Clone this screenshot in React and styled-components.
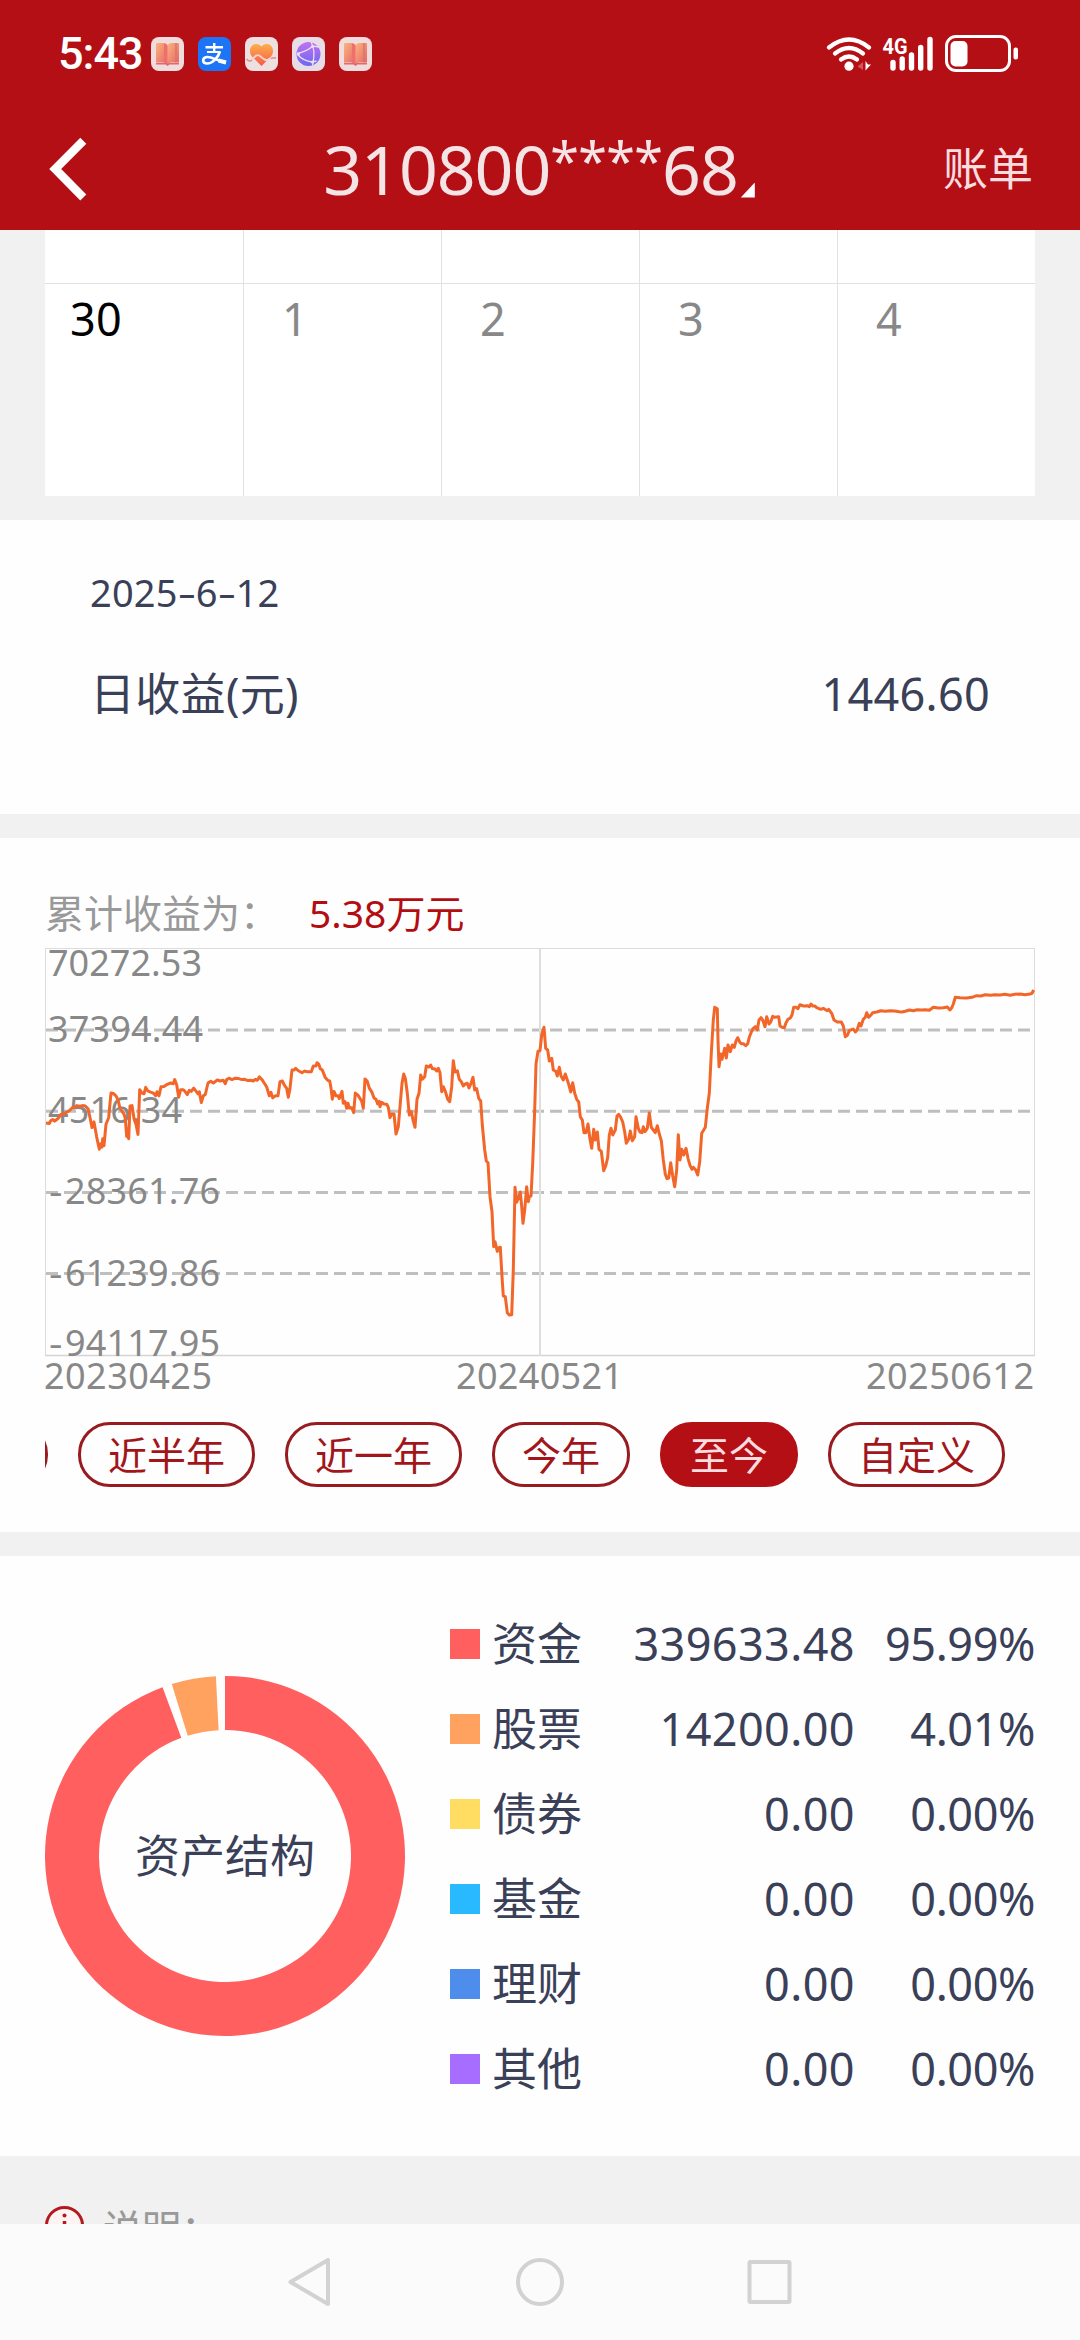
import React from 'react';
import styled, { createGlobalStyle } from 'styled-components';

const GlobalStyle = createGlobalStyle`
  * {
    box-sizing: border-box;
  }
  body {
    margin: 0;
    background: #f1f1f1;
    font-family: "Noto Sans", "Noto Sans CJK SC", sans-serif;
    color: #3a4058;
  }
`;

const Screen = styled.div`
  display: flex;
  flex-direction: column;
  width: 1080px;
  height: 2340px;
  overflow: hidden;
`;

const Header = styled.header`
  flex: none;
  height: 230px;
  background: #b40f15;
`;

const StatusBar = styled.div`
  display: flex;
  align-items: center;
  height: 107px;
  padding: 0 61px 0 58px;
`;

const Clock = styled.span`
  width: 93px;
  font-family: Roboto, sans-serif;
  font-size: 45px;
  font-weight: 500;
  letter-spacing: -1px;
  color: #fff;
`;

const AppIcons = styled.div`
  display: flex;
  gap: 14px;
  flex: 1;
`;

const StatusIcons = styled.svg`
  display: block;
  width: 194px;
  height: 40px;
`;

const TitleBar = styled.div`
  display: flex;
  align-items: center;
  justify-content: space-between;
  height: 123px;
  padding: 0 47px 0 45px;
`;

const SideSlot = styled.div`
  display: flex;
  width: 100px;
  justify-content: ${(props) => (props.$end ? 'flex-end' : 'flex-start')};
  font-size: 45px;
  line-height: 60px;
  color: #fbdde0;
`;

const Account = styled.h1`
  display: flex;
  align-items: center;
  margin: 0;
  font-size: 68px;
  font-weight: 400;
  line-height: 90px;
  letter-spacing: -1.05px;
  color: #f5e4e6;
`;

const Stars = styled.span`
  position: relative;
  top: -9px;
  font-size: 52px;
  letter-spacing: -0.7px;
`;

const Corner = styled.i`
  align-self: flex-end;
  width: 14px;
  height: 15px;
  margin: 0 0 16px 3px;
  background: #fff;
  clip-path: polygon(100% 0, 100% 100%, 0 100%);
`;

const Body = styled.main`
  flex: 1;
  min-height: 0;
  overflow: hidden;
`;

const Calendar = styled.div`
  display: grid;
  grid-template-columns: repeat(5, 198px);
  grid-template-rows: 53px 213px;
  margin: 0 45px 24px;
  background: #fff;
`;

const Day = styled.div`
  border-left: ${(props) => (props.$first ? 'none' : '1px solid #e2e2e2')};
  border-top: ${(props) => (props.$top ? 'none' : '1px solid #e2e2e2')};
`;

const DayNumber = styled.span`
  display: block;
  width: 102px;
  padding-top: 5px;
  text-align: center;
  font-size: 45px;
  line-height: 60px;
  letter-spacing: 0.3px;
  color: ${(props) => (props.$current ? '#000' : '#888')};
`;

const Card = styled.section`
  height: ${(props) => props.$height}px;
  margin-bottom: 24px;
  padding: ${(props) => props.$padding};
  background: #fefefe;
`;

const DateLine = styled.div`
  font-size: 38px;
  line-height: 65px;
  letter-spacing: 0.2px;
`;

const Dash = styled.span`
  display: inline-block;
  width: 18px;
  text-align: center;
  transform: scaleX(1.5);
`;

const ProfitRow = styled.div`
  display: flex;
  justify-content: space-between;
  margin-top: 19px;
  font-size: 45px;
  line-height: 100px;
  letter-spacing: 0.3px;
`;

const TotalLine = styled.div`
  display: flex;
  align-items: center;
  height: 74px;
  font-size: 39px;
  color: #999;
`;

const TotalValue = styled.span`
  margin-left: 30px;
  color: #b30d12;
`;

const ChartSvg = styled.svg`
  display: block;
  width: 990px;
  height: 450px;
  overflow: visible;

  text {
    font-size: 36px;
    fill: #888;
  }
`;

const Ranges = styled.div`
  display: flex;
  gap: 30px;
  margin-top: 24px;
  overflow: hidden;
`;

const RangeButton = styled.button`
  flex: none;
  height: 65px;
  padding: 0 27px;
  border: 3px solid ${(props) => (props.$active ? '#b40f15' : '#981b20')};
  border-radius: 32px;
  background: ${(props) => (props.$active ? '#b40f15' : '#fefefe')};
  color: ${(props) => (props.$active ? '#fbdde0' : '#a2161b')};
  font-family: inherit;
  font-size: 39px;
  line-height: 57px;
`;

// the range before the first visible one, scrolled almost out of view
const ScrolledRange = styled(RangeButton)`
  width: 177px;
  margin-left: -174px;
`;

const Assets = styled.div`
  display: flex;
  justify-content: space-between;
`;

const Donut = styled.svg`
  width: 360px;
  height: 360px;
  margin-top: 75px;

  text {
    font-size: 45px;
    fill: #3a4058;
  }
`;

const Legend = styled.div`
  width: 585px;
`;

const LegendRow = styled.div`
  display: grid;
  grid-template-columns: 42px 120px 1fr 180px;
  align-items: center;
  height: 85px;
  font-size: 45px;
  line-height: 60px;
`;

const Swatch = styled.i`
  width: 30px;
  height: 30px;
  background: ${(props) => props.$color};
`;

const Amount = styled.span`
  text-align: right;
  letter-spacing: 0.4px;
`;

const Percent = styled(Amount)`
  letter-spacing: -0.4px;
`;

const Notice = styled.div`
  display: flex;
  align-items: flex-start;
  gap: 19px;
  padding: 26px 45px 0;
  font-size: 39px;
  line-height: 44px;
  color: #999;
`;

const NavBar = styled.nav`
  display: flex;
  flex: none;
  justify-content: center;
  height: 116px;
  background: #fbfbfb;
`;

const days = ['30', '1', '2', '3', '4'];

const ranges = ['近半年', '近一年', '今年', '至今', '自定义'];

const assets = [
  { name: '资金', amount: '339633.48', percent: '95.99%', color: '#ff5f5f' },
  { name: '股票', amount: '14200.00', percent: '4.01%', color: '#ffa15f' },
  { name: '债券', amount: '0.00', percent: '0.00%', color: '#ffdd62' },
  { name: '基金', amount: '0.00', percent: '0.00%', color: '#28b9ff' },
  { name: '理财', amount: '0.00', percent: '0.00%', color: '#4f8ded' },
  { name: '其他', amount: '0.00', percent: '0.00%', color: '#a76dff' },
];

const yLabels = [
  { sign: '', value: '70272.53', y: 28, width: 152 },
  { sign: '', value: '37394.44', y: 94, width: 153 },
  { sign: '', value: '4516.34', y: 175, width: 132 },
  { sign: '-', value: '28361.76', y: 256, width: 153 },
  { sign: '-', value: '61239.86', y: 337.5, width: 153 },
  { sign: '-', value: '94117.95', y: 408, width: 153 },
];

// profit curve in three pieces, each with its own origin and scale
const pieces = [
  {
    x: -15, y: -78, sy: 2.958,
    points: '48,748 58,750 62,742 68,738 74,743 80,738 86,733 92,723 100,722 110,716 118,712 126,704 134,702 140,697 150,699 158,697 166,698 174,706 180,732 186,762 192,745 200,790 208,826 212,810 216,820 218,795 222,815 228,752 236,732 240,690 243,660 250,661 258,668 264,680 270,705 282,722 286,735 290,788 292,765 296,795 300,698 306,697 312,735 318,752 324,782 329,650 336,660 342,662 347,643 353,653 362,657 370,660 377,668 381,656 387,668 393,641 402,640 412,634 422,630 430,632 434,620 440,636 446,672 452,650 460,650 466,656 472,664 478,652 484,655 491,645 498,654 504,662 508,656 514,688 520,668 526,664 534,630 542,625 550,630 556,626 562,621 570,624 580,622 586,632 590,620 597,616 606,620 616,616 626,617 636,620 644,619 654,623 662,622 670,624 676,619 682,622 688,612 696,620 704,632 710,642 718,668 723,658 728,674 736,668 744,668 750,626 757,624 764,638 770,646 775,672 780,646 786,592 792,592 797,587 804,593 816,600 824,595 832,597 844,597 850,580 858,580 861,570 866,574 871,588 877,592 886,614 893,622 899,624 903,645 907,678 912,655 918,668 924,668 928,676 936,655 940,690 945,685 950,705 954,690 958,704 965,703 971,718 976,660 984,666 990,676 995,684 1000,705 1005,618 1012,625 1018,645 1026,658 1032,674 1038,678 1043,692 1048,684',
  },
  {
    x: 335, y: -18, sy: 3,
    points: '0,530 5,517 12,522 20,523 25,532 30,563 35,552 42,552 48,612 55,590 60,530 66,460 71,432 76,445 82,490 88,555 94,545 99,570 105,592 111,508 117,490 122,435 127,448 134,440 139,408 147,411 152,405 157,416 164,416 170,423 175,415 180,428 185,485 190,470 196,484 203,508 209,515 215,470 220,392 225,426 232,422 238,448 244,455 250,468 257,461 262,460 267,474 273,460 279,442 284,480 290,476 296,505 302,513 307,585 314,660 319,693 324,698 330,800 336,845 341,950 345,935 352,964 357,953 361,952 366,1040 370,1098 376,1100 382,1148 388,1155 395,1154 400,1020 405,772 410,817 416,800 421,786 425,830 429,880 434,840 440,770 445,815 448,800 453,798 458,700 464,540 468,402 474,364 480,362 485,315 492,292 497,355 503,360 508,393 515,385 520,420 527,424 532,438 538,412 543,438 550,450 556,432 562,450 567,466 572,486 578,458 584,490 590,508 596,516 601,560 607,570 612,608 618,608 624,582 630,628 635,655 641,598 646,630 652,606 657,658 664,664 671,722 677,708 683,683 688,615 693,595 698,615 706,600 711,558 716,553 722,562 728,576 734,606 739,640 746,628 751,603 757,632 764,620 768,560 775,595 780,606 786,608 790,590 795,605 802,595 808,549 814,592 820,600 826,608 832,587 838,612 844,632 850,690 856,733 861,746 866,744 872,698 878,738 884,770 890,720 895,614 900,690 905,658 911,675 918,655 924,685 930,706 936,718 940,712 947,720 953,735 959,695 965,610 971,600 976,592 982,535 988,490 994,370 1000,270 1004,232 1012,236 1014,330',
  },
  {
    x: 655, y: -18, sy: 3,
    points: '57,410 62,372 66,388 70,372 74,355 79,384 84,345 91,365 97,345 103,352 108,333 113,323 119,336 124,341 130,341 137,347 143,341 148,322 154,306 160,295 166,290 172,300 177,270 183,263 189,272 195,290 200,260 207,282 212,276 218,259 224,262 236,260 240,288 246,292 253,293 258,278 264,268 271,264 276,255 281,232 288,232 294,236 300,224 310,228 322,227 328,230 333,222 338,228 344,228 350,233 362,238 370,235 378,240 382,242 386,238 395,250 402,270 412,276 424,276 430,288 436,320 442,316 448,302 455,299 460,297 466,306 472,298 478,280 483,288 490,268 496,262 500,248 506,262 512,256 518,248 530,246 542,242 556,244 570,242 584,243 598,245 606,246 616,244 628,240 640,242 652,239 664,240 676,239 688,241 700,232 715,234 730,233 742,231 750,240 756,232 760,222 766,202 780,203 800,204 816,202 830,197 842,198 856,194 872,196 884,194 900,195 915,193 930,196 945,193 960,192 975,194 990,192 996,190 1001,180',
  },
];

const curve = pieces
  .map((piece) =>
    piece.points
      .split(' ')
      .map((point) => {
        const [x, y] = point.split(',').map(Number);
        return `${(x / 3 + piece.x).toFixed(1)},${(y / piece.sy + piece.y).toFixed(1)}`;
      })
      .join(' ')
  )
  .join(' ');

// ring slice between two angles, degrees clockwise from the top
const slice = (from, to) => {
  const at = (r, deg) => {
    const a = (deg * Math.PI) / 180;
    return `${(180 + r * Math.sin(a)).toFixed(2)} ${(180 - r * Math.cos(a)).toFixed(2)}`;
  };
  const large = to - from > 180 ? 1 : 0;
  return `M${at(180, from)} A180 180 0 ${large} 1 ${at(180, to)} L${at(126, to)} A126 126 0 ${large} 0 ${at(126, from)} Z`;
};

function BookIcon({ id }) {
  return (
    <svg width="33" height="34" viewBox="0 0 33 34">
      <defs>
        <linearGradient id={id} x1="0" y1="0" x2="1" y2="1">
          <stop offset="0" stopColor="#fbb47c" />
          <stop offset="1" stopColor="#e5656c" />
        </linearGradient>
      </defs>
      <rect width="33" height="34" rx="8" fill="#f1dcdd" />
      <path d="M5 26h23v1.5H18.5L16.5 29l-2-1.500H5z" fill="#e2686d" />
      <path d="M5 7q0-1 1-1h6q4 0 4.500 2.500V27q-1-1.500-4-1.500H5z" fill={`url(#${id})`} />
      <path d="M28 7q0-1-1-1h-6q-4 0-4.500 2.500V27q1-1.500 4-1.500H28z" fill={`url(#${id})`} />
      <path d="M13 6.200q3 .5 3.500 2.500V27q-1-1.500-3.500-1.500z" fill="#ee7069" />
      <path d="M25 6v19.500" stroke="#d9775f" strokeWidth="1.500" />
    </svg>
  );
}

function PayIcon() {
  return (
    <svg width="33" height="34" viewBox="0 0 33 34">
      <rect width="33" height="34" rx="8" fill="#1d74f5" />
      <g fill="none" stroke="#fff" strokeLinecap="butt">
        <path d="M7.500 10.200h17.500M16.200 6v9" strokeWidth="2.400" />
        <path d="M9 15h13.500" strokeWidth="2" />
        <path d="M22 14.500C20 21 14 27 8.500 26.500 4 26 4 20.500 9 20c5-.5 10 4 19 5.500" strokeWidth="2.600" />
        <path d="M20.500 23.500l7.500 2" strokeWidth="4" />
      </g>
    </svg>
  );
}

function HealthIcon() {
  return (
    <svg width="33" height="34" viewBox="0 0 33 34">
      <defs>
        <linearGradient id="heart" x1="0" y1="0" x2="0" y2="1">
          <stop offset="0" stopColor="#fbb04a" />
          <stop offset="1" stopColor="#f8574b" />
        </linearGradient>
      </defs>
      <rect width="33" height="34" rx="8" fill="#eedfe1" />
      <path d="M16.500 29L7 19.500C3.500 15.500 4.500 8 10.500 7c2.500-.4 4.500.5 6 2.500 1.500-2 3.500-2.900 6-2.500 6 1 7 8.500 3.500 12.500z" fill="url(#heart)" />
      <path d="M1.500 22.500q3 3 5.500.5c2.500-3 4.500-6.500 8-4 3.500 3 5.500 5 8 3.500 2.500-2 4-1.500 8-1.500" fill="none" stroke="#f3d5cf" strokeWidth="1.800" />
      <path d="M1.500 22q3 3.500 5.500 1M26 21.500q2-1 5-.5" fill="none" stroke="#e58f8c" strokeWidth="1.500" />
    </svg>
  );
}

function BrowserIcon() {
  return (
    <svg width="33" height="34" viewBox="0 0 33 34">
      <defs>
        <linearGradient id="globe" x1="0" y1="0" x2="0" y2="1">
          <stop offset="0" stopColor="#c071f2" />
          <stop offset="1" stopColor="#6d68f0" />
        </linearGradient>
      </defs>
      <rect width="33" height="34" rx="8" fill="#e8dde6" />
      <circle cx="16.500" cy="17" r="12" fill="url(#globe)" />
      <g fill="none" stroke="#eadff0" strokeWidth="1.300">
        <path d="M5 16.500Q14 15 21 9l6 1M5.500 17.500Q11 24 20.500 25l4-1M19 5q5 8 1.500 23.500" />
      </g>
      <g fill="#eadff0">
        <circle cx="6.500" cy="17" r="1.600" />
        <circle cx="20.500" cy="9.500" r="1.600" />
        <circle cx="20.500" cy="25" r="1.600" />
      </g>
    </svg>
  );
}

function Status() {
  return (
    <StatusIcons viewBox="825 34 194 40">
      <g fill="none" stroke="#fff" strokeLinecap="round">
        <path d="M829 47.500q20-16 40 0" strokeWidth="4.200" />
        <path d="M835 53.500q14-11 28 0" strokeWidth="4.200" />
        <path d="M841 59.500q8-6 16 0" strokeWidth="4.200" />
        <path d="M893 62.500v5.500M902.200 59v9M911.500 55v13M920.700 47.500v20.500M930 39.500v28.500" strokeWidth="5.400" />
      </g>
      <circle cx="849" cy="66.200" r="4.600" fill="#fff" />
      <path d="M863 62v8l-5.500-3.500z" fill="#d5535a" />
      <path d="M865.500 61v9.500l5.500-6h-3z" fill="#fff" />
      <text x="882.500" y="53.500" fontFamily="Roboto" fontWeight="700" fontSize="22" fill="#fff" textLength="25" lengthAdjust="spacingAndGlyphs">4G</text>
      <rect x="946.500" y="36.500" width="63" height="34" rx="9.500" fill="none" stroke="#fff" strokeWidth="3" />
      <rect x="950.500" y="41" width="17" height="25.500" rx="5" fill="#fff" />
      <rect x="1013.500" y="47.500" width="4.500" height="12" rx="2" fill="#fff" />
    </StatusIcons>
  );
}

function ProfitChart() {
  return (
    <ChartSvg viewBox="0 0 990 450">
      <path d="M0 .5H990M.5 0V408M989.500 0V408" stroke="#dcdcdc" fill="none" />
      <path d="M0 407.500H990" stroke="#d4d4d4" strokeWidth="1.500" />
      {[82, 163.300, 244.500, 325.600].map((y) => (
        <path key={y} d={`M1 ${y}H985`} stroke="#bfbfbf" strokeWidth="3" strokeDasharray="12 6" />
      ))}
      <path d="M495 0V408" stroke="#dedede" strokeWidth="2" />
      {yLabels.map(({ sign, value, y, width }) => (
        <g key={value}>
          {sign && (
            <text x="4" y={y} textLength="13.500" lengthAdjust="spacingAndGlyphs">{sign}</text>
          )}
          <text x={sign ? 20 : 3} y={y} textLength={width + 2}>{value}</text>
        </g>
      ))}
      <text x="-1" y="441" textLength="168">20230425</text>
      <text x="411" y="441" textLength="167">20240521</text>
      <text x="821" y="441" textLength="168">20250612</text>
      <polyline points={curve} fill="none" stroke="#f26629" strokeWidth="3" strokeLinejoin="round" />
    </ChartSvg>
  );
}

export default function App() {
  return (
    <Screen>
      <GlobalStyle />
      <Header>
        <StatusBar>
          <Clock>5:43</Clock>
          <AppIcons>
            <BookIcon id="book-a" />
            <PayIcon />
            <HealthIcon />
            <BrowserIcon />
            <BookIcon id="book-b" />
          </AppIcons>
          <Status />
        </StatusBar>
        <TitleBar>
          <SideSlot>
            <svg width="44" height="66" viewBox="45 135 44 66">
              <path d="M83.300 139.700L55.200 168l28.100 28.500" fill="none" stroke="#fff" strokeWidth="8.500" />
            </svg>
          </SideSlot>
          <Account>
            310800<Stars>****</Stars>68
            <Corner />
          </Account>
          <SideSlot $end>账单</SideSlot>
        </TitleBar>
      </Header>

      <Body>
        <Calendar>
          {days.map((day, i) => (
            <Day key={day} $top $first={i === 0} />
          ))}
          {days.map((day, i) => (
            <Day key={day} $first={i === 0}>
              <DayNumber $current={i === 0}>{day}</DayNumber>
            </Day>
          ))}
        </Calendar>

        <Card $height={294} $padding="40px 90px 0">
          <DateLine>
            2025<Dash>-</Dash>6<Dash>-</Dash>12
          </DateLine>
          <ProfitRow>
            <span>日收益(元)</span>
            <span>1446.60</span>
          </ProfitRow>
        </Card>

        <Card $height={694} $padding="36px 45px 0">
          <TotalLine>
            累计收益为：
            <TotalValue>5.38万元</TotalValue>
          </TotalLine>
          <ProfitChart />
          <Ranges>
            <ScrolledRange />
            {ranges.map((range) => (
              <RangeButton key={range} $active={range === '至今'}>{range}</RangeButton>
            ))}
          </Ranges>
        </Card>

        <Card $height={600} $padding="45px 45px 0">
          <Assets>
            <Donut viewBox="0 0 360 360">
              <path d={slice(0, 339.700)} fill="#ff5f5f" />
              <path d={slice(342.800, 357.100)} fill="#ffa15f" />
              <text x="180" y="197" textAnchor="middle">资产结构</text>
            </Donut>
            <Legend>
              {assets.map(({ name, amount, percent, color }) => (
                <LegendRow key={name}>
                  <Swatch $color={color} />
                  <span>{name}</span>
                  <Amount>{amount}</Amount>
                  <Percent>{percent}</Percent>
                </LegendRow>
              ))}
            </Legend>
          </Assets>
        </Card>

        <Notice>
          <svg width="39" height="39" viewBox="0 0 39 39">
            <circle cx="19.500" cy="19.500" r="18" fill="#fdf3f3" stroke="#b3191e" strokeWidth="3" />
            <circle cx="19.500" cy="9.500" r="2" fill="#b3191e" />
            <path d="M19.500 15v15" stroke="#b3191e" strokeWidth="3.500" />
          </svg>
          说明：
        </Notice>
      </Body>

      <NavBar>
        <svg width="520" height="116" viewBox="280 2224 520 116">
          <g fill="none" stroke="#d2d2d2" strokeWidth="4" strokeLinejoin="round">
            <path d="M290.500 2282L328 2260v44z" />
            <circle cx="540" cy="2282" r="22" />
            <rect x="749.500" y="2262" width="40" height="40" rx="1" />
          </g>
        </svg>
      </NavBar>
    </Screen>
  );
}
